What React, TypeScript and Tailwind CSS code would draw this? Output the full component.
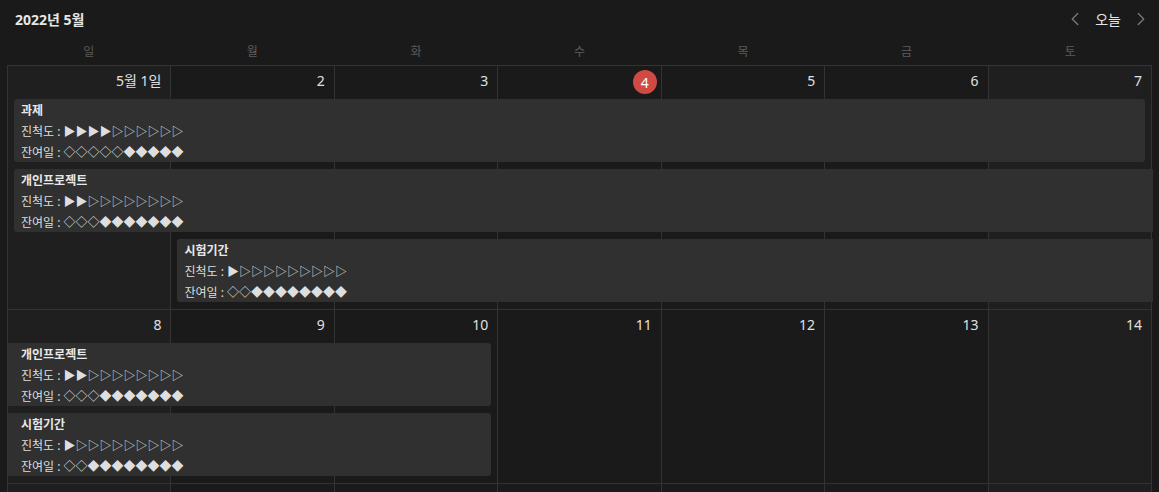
import { ChevronLeft, ChevronRight } from "lucide-react";

const WEEKDAYS = ["일", "월", "화", "수", "목", "금", "토"];

const COL_START = [
  "col-start-1",
  "col-start-2",
  "col-start-3",
  "col-start-4",
  "col-start-5",
  "col-start-6",
  "col-start-7",
];
const COL_END = [
  "col-end-2",
  "col-end-3",
  "col-end-4",
  "col-end-5",
  "col-end-6",
  "col-end-7",
  "col-end-8",
];
const ROW_START = ["row-start-2", "row-start-3", "row-start-4"];

type CalEvent = {
  title: string;
  progress: string;
  remain: string;
  start: number; // 0-based column
  end: number; // 0-based column, inclusive
  row: number;
  contLeft?: boolean;
  contRight?: boolean;
};

type Week = {
  days: string[];
  today?: number;
  events: CalEvent[];
  rows: number;
};

const WEEKS: Week[] = [
  {
    days: ["5월 1일", "2", "3", "4", "5", "6", "7"],
    today: 3,
    rows: 3,
    events: [
      { title: "과제", progress: "▶▶▶▶▷▷▷▷▷▷", remain: "◇◇◇◇◇◆◆◆◆◆", start: 0, end: 6, row: 0 },
      { title: "개인프로젝트", progress: "▶▶▷▷▷▷▷▷▷▷", remain: "◇◇◇◆◆◆◆◆◆◆", start: 0, end: 6, row: 1, contRight: true },
      { title: "시험기간", progress: "▶▷▷▷▷▷▷▷▷▷", remain: "◇◇◆◆◆◆◆◆◆◆", start: 1, end: 6, row: 2, contRight: true },
    ],
  },
  {
    days: ["8", "9", "10", "11", "12", "13", "14"],
    rows: 2,
    events: [
      { title: "개인프로젝트", progress: "▶▶▷▷▷▷▷▷▷▷", remain: "◇◇◇◆◆◆◆◆◆◆", start: 0, end: 2, row: 0, contLeft: true },
      { title: "시험기간", progress: "▶▷▷▷▷▷▷▷▷▷", remain: "◇◇◆◆◆◆◆◆◆◆", start: 0, end: 2, row: 1, contLeft: true },
    ],
  },
  {
    // next week: only its top edge shows below the fold
    days: ["", "", "", "", "", "", ""],
    rows: 2,
    events: [],
  },
];

const symbolFont = { fontFamily: '"Noto Sans CJK KR", "DejaVu Sans", sans-serif' };

const EventBar = ({ ev }: { ev: CalEvent }) => {
  return (
    <div
      className={[
        "z-10 mb-[7px] h-[63px] bg-[#303030] pt-[2px] text-[12px] leading-[20px] text-[#dedede]",
        COL_START[ev.start],
        COL_END[ev.end],
        ROW_START[ev.row],
        ev.contLeft ? "ml-0 pl-[13px]" : "ml-[6px] rounded-l-[3px] pl-[7px]",
        ev.contRight ? "mr-[-1px]" : "mr-[7px] rounded-r-[3px]",
      ].join(" ")}
    >
      <div className="font-bold text-[#e8e8e8]">{ev.title}</div>
      <div className="whitespace-nowrap">
        진척도 : <span style={symbolFont}>{ev.progress}</span>
      </div>
      <div className="whitespace-nowrap">
        잔여일 : <span style={symbolFont}>{ev.remain}</span>
      </div>
    </div>
  );
};

const WeekRow = ({ week }: { week: Week }) => {
  const rowsClass =
    week.rows === 3
      ? "grid-rows-[33px_70px_70px_70px]"
      : "grid-rows-[33px_70px_70px]";
  return (
    <div className={`grid grid-cols-7 border-t border-[#333333] ${rowsClass}`}>
      {week.days.map((d, i) => (
        <div
          key={i}
          className={[
            "row-span-full flex justify-end border-r border-[#333333]",
            COL_START[i],
            i === 0 || i === 6 ? "bg-[#1f1f1f]" : "bg-[#1a1a1a]",
          ].join(" ")}
        >
          {week.today === i ? (
            <div className="mr-[4px] mt-[4px] flex h-[24px] w-[24px] items-center justify-center rounded-full bg-[#d04a43] text-[14px] text-white">
              {d}
            </div>
          ) : (
            d && <div className="pr-[9px] pt-[5px] text-[14px] leading-[20px] text-[#e0e0e0]">{d}</div>
          )}
        </div>
      ))}
      {week.events.map((ev) => (
        <EventBar key={ev.title + ev.row} ev={ev} />
      ))}
    </div>
  );
};

export default function App() {
  return (
    <div
      className="h-[492px] w-[1159px] overflow-hidden bg-[#1a1a1a] px-[7px]"
      style={{ fontFamily: '"Noto Sans", "Noto Sans CJK KR", sans-serif' }}
    >
      {/* ===== Toolbar ===== */}
      <div className="flex h-[38px] items-center justify-between pl-[8px]">
        <h2 className="text-[14px] font-bold text-[#e6e6e6]">2022년 5월</h2>
        <div className="flex items-center gap-[9px] text-[#7a7a7a]">
          <ChevronLeft size={22} strokeWidth={1.4} />
          <span className="text-[14px] text-[#e6e6e6]">오늘</span>
          <ChevronRight size={22} strokeWidth={1.4} />
        </div>
      </div>

      {/* ===== Weekday header ===== */}
      <div className="grid h-[27px] grid-cols-7 items-center">
        {WEEKDAYS.map((w) => (
          <div key={w} className="text-center text-[12px] text-[#5c5c5c]">
            {w}
          </div>
        ))}
      </div>

      {/* ===== Month grid ===== */}
      <div className="border-l border-[#333333]">
        {WEEKS.map((w, i) => (
          <WeekRow key={i} week={w} />
        ))}
      </div>
    </div>
  );
}
